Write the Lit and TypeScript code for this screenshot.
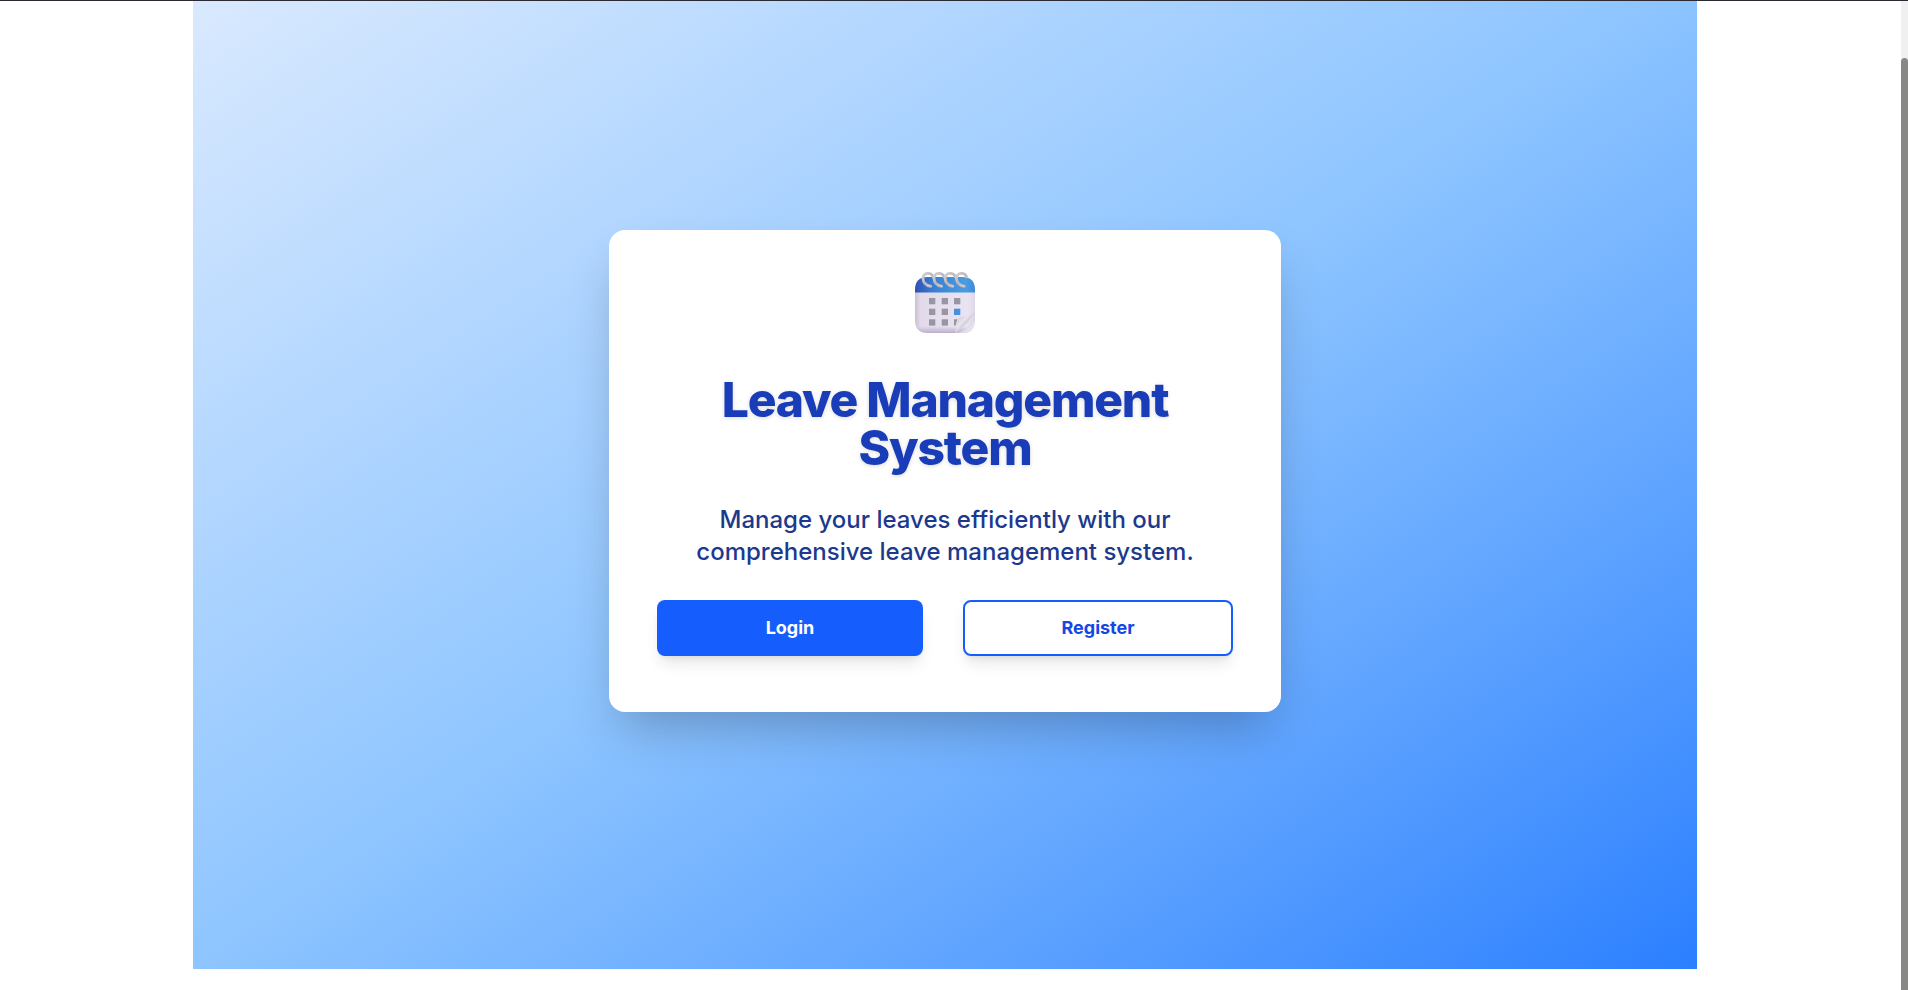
import { LitElement, html, css, svg } from "lit";
import { customElement } from "lit/decorators.js";

@customElement("calendar-icon")
class CalendarIcon extends LitElement {
  static styles = css`
    :host {
      display: block;
      width: 64px;
      height: 64px;
    }
    svg {
      display: block;
      width: 100%;
      height: 100%;
    }
  `;

  render() {
    const rings = [10, 21, 32.2, 43.5];
    const days = [
      [16, 27], [28.7, 27], [41, 27],
      [16, 37.7], [28.7, 37.7],
      [16, 48.3], [28.7, 48.3],
    ];
    return html`<svg viewBox="0 0 64 64" role="img" aria-label="Calendar">
      <defs>
        <linearGradient id="head" x1="0" y1="0" x2="1" y2="0">
          <stop offset="0" stop-color="#2f50b4" />
          <stop offset=".3" stop-color="#3a7ed3" />
          <stop offset=".85" stop-color="#4a9de0" />
          <stop offset="1" stop-color="#4188d8" />
        </linearGradient>
        <linearGradient id="page" x1="0" y1="0" x2="1" y2="0">
          <stop offset="0" stop-color="#c9c0d2" />
          <stop offset=".09" stop-color="#e2daea" />
          <stop offset=".88" stop-color="#e9e4f1" />
          <stop offset="1" stop-color="#ded8ea" />
        </linearGradient>
        <linearGradient id="foot" x1="0" y1="0" x2="0" y2="1">
          <stop offset=".88" stop-color="#bcaecb" stop-opacity="0" />
          <stop offset="1" stop-color="#bcaecb" />
        </linearGradient>
        <linearGradient id="curl" x1="0" y1="0" x2="1" y2="1">
          <stop offset=".2" stop-color="#cfc9d6" />
          <stop offset=".42" stop-color="#e9e5ee" />
          <stop offset=".52" stop-color="#d6d0dd" />
        </linearGradient>
        <linearGradient id="under" x1="0" y1="0" x2="1" y2="1">
          <stop offset=".45" stop-color="#cbc4d3" />
          <stop offset=".75" stop-color="#e6e1ee" />
        </linearGradient>
        <linearGradient id="ring" x1="0" y1="0" x2="1" y2="1">
          <stop offset="0" stop-color="#d3d0d5" />
          <stop offset=".5" stop-color="#bab6bd" />
          <stop offset="1" stop-color="#d2cdd4" />
        </linearGradient>
        <clipPath id="shape">
          <path d="M15 6H49Q62 6 62 19V49Q62 62 49 62H15Q2 62 2 49V19Q2 6 15 6Z" />
        </clipPath>
      </defs>
      <g clip-path="url(#shape)">
        <rect x="2" y="6" width="60" height="56" fill="url(#page)" />
        <rect x="2" y="6" width="60" height="56" fill="url(#foot)" />
        <rect x="2" y="6" width="60" height="15.5" fill="url(#head)" />
        ${days.map(([x, y]) => svg`<rect x=${x} y=${y} width="6.3" height="6.3" fill="#9896a3" />`)}
        <rect x="41" y="37.7" width="6.3" height="6.3" fill="#4790dc" />
        <path d="M41 48.3H44.5L42.6 54.6H41Z" fill="#9896a3" />
        <path d="M42 62Q58 60 62 41V62Z" fill="url(#under)" />
        <path d="M42 62Q44 58 43.5 52Q44 47 49 45.5Q55 45 62 40.5Q56 53 42 62Z" fill="url(#curl)" />
      </g>
      ${rings.map((x) => svg`<path
        d=${`M${x + 7.5} 15.2C${x + 3} 14.6 ${x} 11 ${x} 7.5C${x} 1.2 ${x + 9} .8 ${x + 10} 6`}
        fill="none" stroke="url(#ring)" stroke-width="2.8" stroke-linecap="round" />`)}
    </svg>`;
  }
}

@customElement("app-root")
class AppRoot extends LitElement {
  static styles = css`
    :host {
      display: block;
      font-family: Inter, "Liberation Sans", sans-serif;
    }
    * {
      box-sizing: border-box;
    }
    .window {
      display: flex;
      height: 100vh;
      overflow: hidden;
      background: #fff;
      border-top: 1px solid #2b2a33;
    }
    .viewport {
      flex: 1;
      min-width: 0;
      padding-right: 11px;
    }
    .page {
      max-width: 1536px;
      margin: -28px auto 0;
      padding: 0 16px;
    }
    .hero {
      display: flex;
      align-items: center;
      justify-content: center;
      min-height: calc(100vh + 6px);
      background: linear-gradient(to bottom right in oklab, #dbeafe, #8ec5ff, #2b7fff);
    }
    .card {
      display: flex;
      flex-direction: column;
      align-items: center;
      width: 100%;
      max-width: 672px;
      padding: 41px 48px 56px;
      border-radius: 16px;
      background: #fff;
      box-shadow: 0 25px 50px -12px rgb(0 0 0 / 0.25);
      text-align: center;
    }
    h1 {
      margin: 41px 0 0;
      color: #193cb8;
      font-size: 48px;
      font-weight: 800;
      line-height: 48px;
      letter-spacing: -0.025em;
      filter: drop-shadow(0 1px 2px rgb(0 0 0 / 0.15));
    }
    p {
      margin: 32px 0;
      color: #1c398e;
      font-size: 24px;
      font-weight: 500;
      line-height: 32px;
    }
    .actions {
      display: flex;
      gap: 40px;
      width: 100%;
    }
    .button {
      flex: 1 1 32px;
      height: 56px;
      padding: 0 16px;
      border: 0;
      border-radius: 8px;
      font-family: inherit;
      font-size: 18px;
      font-weight: 700;
      line-height: 28px;
      cursor: pointer;
      box-shadow: 0 10px 15px -3px rgb(0 0 0 / 0.1), 0 4px 6px -4px rgb(0 0 0 / 0.1);
    }
    .primary {
      background: #155dfc;
      color: #fff;
    }
    .outline {
      border: 2px solid #155dfc;
      background: #fff;
      color: #1447e6;
    }
    .scrollbar {
      width: 7px;
      padding-top: 57px;
      background: #f0f0f0;
    }
    .thumb {
      height: 100%;
      border-radius: 4px 4px 0 0;
      background: #888886;
    }
  `;

  render() {
    return html`<div class="window">
      <div class="viewport">
        <div class="page">
          <main class="hero">
            <section class="card">
              <calendar-icon></calendar-icon>
              <h1>Leave Management System</h1>
              <p>Manage your leaves efficiently with our comprehensive leave management system.</p>
              <div class="actions">
                <button class="button primary" type="button">Login</button>
                <button class="button outline" type="button">Register</button>
              </div>
            </section>
          </main>
        </div>
      </div>
      <div class="scrollbar" aria-hidden="true"><div class="thumb"></div></div>
    </div>`;
  }
}
